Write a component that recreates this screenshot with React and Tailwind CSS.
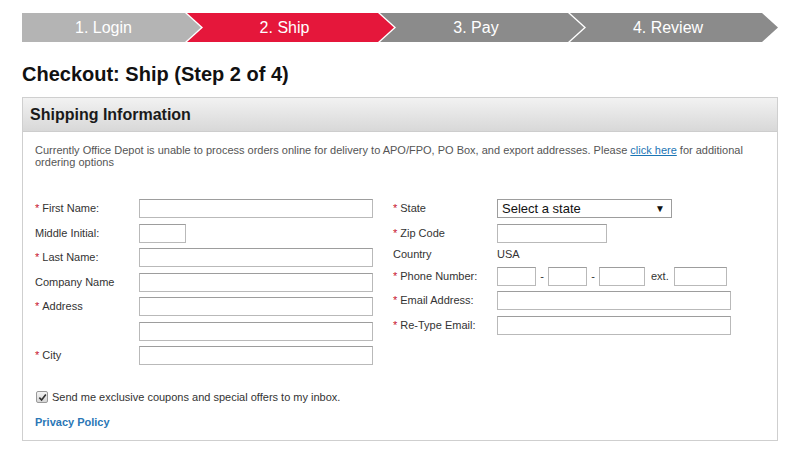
import React from "react";

const steps = [
  { label: "1. Login", w: "w-[179px]", bg: "bg-[#b4b4b4]", first: true },
  { label: "2. Ship", w: "w-[207px]", bg: "bg-[#e5173b]" },
  { label: "3. Pay", w: "w-[204px]", bg: "bg-[#8b8b8b]" },
  { label: "4. Review", w: "w-[208px]", bg: "bg-[#8b8b8b]" },
];

function Req() {
  return <span className="text-[#c8102e] mr-[3px]">*</span>;
}

function Field({ w = "w-[234px]" }) {
  return <input type="text" className={`${w} h-[19px] border border-[#b9b9b9] border-t-[#9d9d9d] bg-white outline-none`} />;
}

function Row({ label, req, children, h = "h-[19px]" }) {
  return (
    <div className={`flex items-center ${h}`}>
      <div className="w-[104px] shrink-0 leading-none">
        {req && <Req />}
        {label}
      </div>
      {children}
    </div>
  );
}

export default function App() {
  return (
    <div className="bg-white w-[800px] h-[455px] pt-[13px] pl-[22px] font-['Liberation_Sans',Arial,sans-serif] text-[#333]">
      {/* step bar */}
      <div className="flex h-[29px]">
        {steps.map((s) => (
          <div
            key={s.label}
            className={`${s.w} ${s.bg} h-full shrink-0 flex items-center justify-center text-white text-[16px] ${
              s.first
                ? "pr-[16px] [clip-path:polygon(0_0,calc(100%-16px)_0,100%_50%,calc(100%-16px)_100%,0_100%)]"
                : "-ml-[14px] pl-[10px] pr-[22px] [clip-path:polygon(0_0,calc(100%-16px)_0,100%_50%,calc(100%-16px)_100%,0_100%,16px_50%)]"
            }`}
          >
            {s.label}
          </div>
        ))}
      </div>

      <h1 className="mt-[22px] text-[20px] font-bold text-[#111] leading-none">Checkout: Ship (Step 2 of 4)</h1>

      {/* shipping panel */}
      <div className="mt-[13px] w-[756px] h-[344px] border border-[#cfcfcf] flex flex-col">
        <div className="h-[34px] bg-gradient-to-b from-[#f2f2f2] to-[#d8d8d8] border-b border-[#cdcdcd] flex items-center px-[7px]">
          <span className="text-[16px] font-bold text-[#1a1a1a]">Shipping Information</span>
        </div>
        <div className="px-[12px] pt-[12px] text-[11px]">
          <p className="text-[#555] leading-[12px]">
            Currently Office Depot is unable to process orders online for delivery to APO/FPO, PO Box, and export addresses. Please{" "}
            <span className="text-[#1b75b5] underline">click here</span> for additional ordering options
          </p>

          <div className="mt-[31px] flex">
            <div className="w-[358px] flex flex-col gap-[5.5px]">
              <Row label="First Name:" req><Field /></Row>
              <Row label="Middle Initial:"><Field w="w-[47px]" /></Row>
              <Row label="Last Name:" req><Field /></Row>
              <Row label="Company Name"><Field /></Row>
              <Row label="Address" req><Field /></Row>
              <Row label=""><Field /></Row>
              <Row label="City" req><Field /></Row>
            </div>
            <div className="flex flex-col gap-[5.5px]">
              <Row label="State" req>
                <div className="w-[175px] h-[19px] border border-[#9d9d9d] bg-white flex items-center justify-between pl-[4px] pr-[6px] text-[13px] text-[#111]">
                  <span>Select a state</span>
                  <span className="text-[10px]">▼</span>
                </div>
              </Row>
              <Row label="Zip Code" req><Field w="w-[110px]" /></Row>
              <Row label="Country" h="h-[13px]">
                <span>USA</span>
              </Row>
              <Row label="Phone Number:" req>
                <Field w="w-[39px]" />
                <span className="w-[12px] text-center">-</span>
                <Field w="w-[39px]" />
                <span className="w-[12px] text-center">-</span>
                <Field w="w-[46px]" />
                <span className="ml-[6px] mr-[5px]">ext.</span>
                <Field w="w-[53px]" />
              </Row>
              <Row label="Email Address:" req><Field /></Row>
              <Row label="Re-Type Email:" req><Field /></Row>
            </div>
          </div>

          <div className="mt-[24px] flex items-center">
            <span className="ml-[1px] w-[12px] h-[12px] border border-[#9a9a9a] rounded-[2px] bg-gradient-to-b from-[#f4f4f4] to-[#d6d6d6] flex items-center justify-center">
              <svg width="9" height="9" viewBox="0 0 10 10">
                <path d="M1.5 5.2 L4 7.8 L8.7 1.8" fill="none" stroke="#333" strokeWidth="1.8" />
              </svg>
            </span>
            <span className="ml-[4px]">Send me exclusive coupons and special offers to my inbox.</span>
          </div>
          <div className="mt-[8px] font-bold text-[#2a77b6]">Privacy Policy</div>
        </div>
      </div>
    </div>
  );
}
